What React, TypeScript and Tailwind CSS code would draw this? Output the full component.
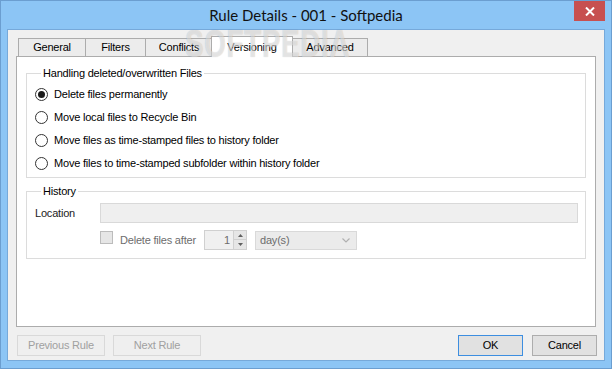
import React from 'react';

const OPTIONS = [
  'Delete files permanently',
  'Move local files to Recycle Bin',
  'Move files as time-stamped files to history folder',
  'Move files to time-stamped subfolder within history folder',
];

const TABS = [
  { label: 'General', width: 'w-[68px] border-l' },
  { label: 'Filters', width: 'w-[60px]' },
  { label: 'Conflicts', width: 'w-[67px]' },
];

function Radio({ checked, label }: { checked?: boolean; label: string }) {
  return (
    <label className="flex h-[23px] items-center">
      <span className="flex h-[13px] w-[13px] items-center justify-center rounded-full border border-[#333333] bg-white">
        {checked && <span className="h-[7px] w-[7px] rounded-full bg-[#1b1b1b]" />}
      </span>
      <span className="ml-[6px]">{label}</span>
    </label>
  );
}

function Button({ label, disabled, primary, className = '' }: { label: string; disabled?: boolean; primary?: boolean; className?: string }) {
  const look = disabled
    ? 'border-[#d9d9d9] bg-[#efefef] text-[#a0a0a0]'
    : primary
    ? 'border-[#3d8ee0] bg-[#e1e1e1] text-black'
    : 'border-[#adadad] bg-[#e1e1e1] text-black';
  return (
    <button className={`flex h-[21px] items-center justify-center border ${look} ${className}`}>{label}</button>
  );
}

export default function App() {
  return (
    <div className="relative flex h-[369px] w-[612px] flex-col border border-[#6b9ed0] bg-[#8cc5f5] font-['Liberation_Sans',Arial,sans-serif] text-[11px] tracking-[-0.2px] text-black">
      <div className="flex h-[28px] items-center justify-center font-['Lato',sans-serif] text-[15px] tracking-normal text-[#111]">
        Rule Details - 001 - Softpedia
      </div>
      <button className="absolute right-[6px] top-0 flex h-[20px] w-[31px] items-center justify-center bg-[#c75050]">
        <svg width="10" height="9" viewBox="0 0 10 9">
          <path d="M1 0.5 L9 8.5 M9 0.5 L1 8.5" stroke="white" strokeWidth="2" />
        </svg>
      </button>

      <div className="mx-[6px] mb-[7px] flex flex-1 flex-col border border-[#76a9da] bg-[#f0f0f0]">
        <div className="px-[8px] pt-[6px]">
          <div className="flex h-[20px] items-end pl-[2px]">
            {TABS.map(t => (
              <div key={t.label} className={`flex h-[18px] items-center justify-center border-r border-t border-[#acacac] bg-[#ececec] ${t.width}`}>
                {t.label}
              </div>
            ))}
            <div className="relative z-10 -mx-[2px] -mb-px flex h-[21px] w-[82px] items-start justify-center border-l border-r border-t border-[#acacac] bg-white pt-[2px]">
              Versioning
            </div>
            <div className="flex h-[18px] w-[77px] items-center justify-center border-r border-t border-[#acacac] bg-[#ececec] pl-[2px]">
              Advanced
            </div>
          </div>

          <div className="h-[271px] border border-[#acacac] bg-white px-[9px] pt-[9px]">
            <fieldset className="border border-[#dcdcdc] pb-[2px] pl-[8px] pt-[3px]">
              <legend className="ml-[6px] px-[2px] leading-[14px]">Handling deleted/overwritten Files</legend>
              {OPTIONS.map((o, i) => (
                <Radio key={o} label={o} checked={i === 0} />
              ))}
            </fieldset>

            <fieldset className="mt-[6px] border border-[#dcdcdc] pb-[8px] pl-[8px] pr-[7px] pt-[5px]">
              <legend className="ml-[6px] px-[2px] leading-[14px]">History</legend>
              <div className="flex h-[20px] items-center">
                <span className="w-[65px] text-[#222]">Location</span>
                <div className="h-[20px] flex-1 border border-[#d9d9d9] bg-[#efefef]" />
              </div>
              <div className="mt-[7px] flex h-[20px] items-center pl-[65px]">
                <span className="-mt-[5px] h-[13px] w-[13px] border border-[#bcbcbc] bg-[#e6e6e6]" />
                <span className="ml-[7px] w-[84px] whitespace-nowrap text-[#6d6d6d]">Delete files after</span>
                <div className="flex h-[20px] w-[43px] border border-[#d0d0d0] bg-[#f0f0f0]">
                  <span className="flex-1 pr-[3px] text-right leading-[18px] text-[#6d6d6d]">1</span>
                  <div className="flex w-[13px] flex-col border-l border-[#d0d0d0]">
                    <span className="flex h-[9px] items-center justify-center border-b border-[#d0d0d0] bg-[#e6e6e6]">
                      <svg width="5" height="3" viewBox="0 0 5 3"><path d="M2.5 0 L5 3 L0 3 Z" fill="#606060" /></svg>
                    </span>
                    <span className="flex flex-1 items-center justify-center bg-[#e6e6e6]">
                      <svg width="5" height="3" viewBox="0 0 5 3"><path d="M0 0 L5 0 L2.5 3 Z" fill="#606060" /></svg>
                    </span>
                  </div>
                </div>
                <div className="ml-[8px] flex h-[19px] w-[102px] items-center justify-between border border-[#d9d9d9] bg-[#ebebeb] pl-[4px] pr-[6px] text-[#6d6d6d]">
                  <span>day(s)</span>
                  <svg width="8" height="5" viewBox="0 0 8 5"><path d="M0.5 0.5 L4 4 L7.5 0.5" fill="none" stroke="#b0b0b0" strokeWidth="1.2" /></svg>
                </div>
              </div>
            </fieldset>
          </div>
        </div>

        <div className="mt-[8px] flex pl-[9px] pr-[7px]">
          <Button label="Previous Rule" disabled className="w-[88px]" />
          <Button label="Next Rule" disabled className="ml-[8px] w-[88px]" />
          <Button label="OK" primary className="ml-auto w-[65px]" />
          <Button label="Cancel" className="ml-[9px] w-[65px]" />
        </div>
      </div>

      {/* watermark */}
      <span className="pointer-events-none absolute left-[184px] top-[24px] z-20 origin-left scale-x-[0.73] text-[38px] font-bold leading-none tracking-[1px] text-white/50 [text-shadow:0_0_1px_rgba(0,0,0,0.22)]">
        SOFTPEDIA
      </span>
    </div>
  );
}
